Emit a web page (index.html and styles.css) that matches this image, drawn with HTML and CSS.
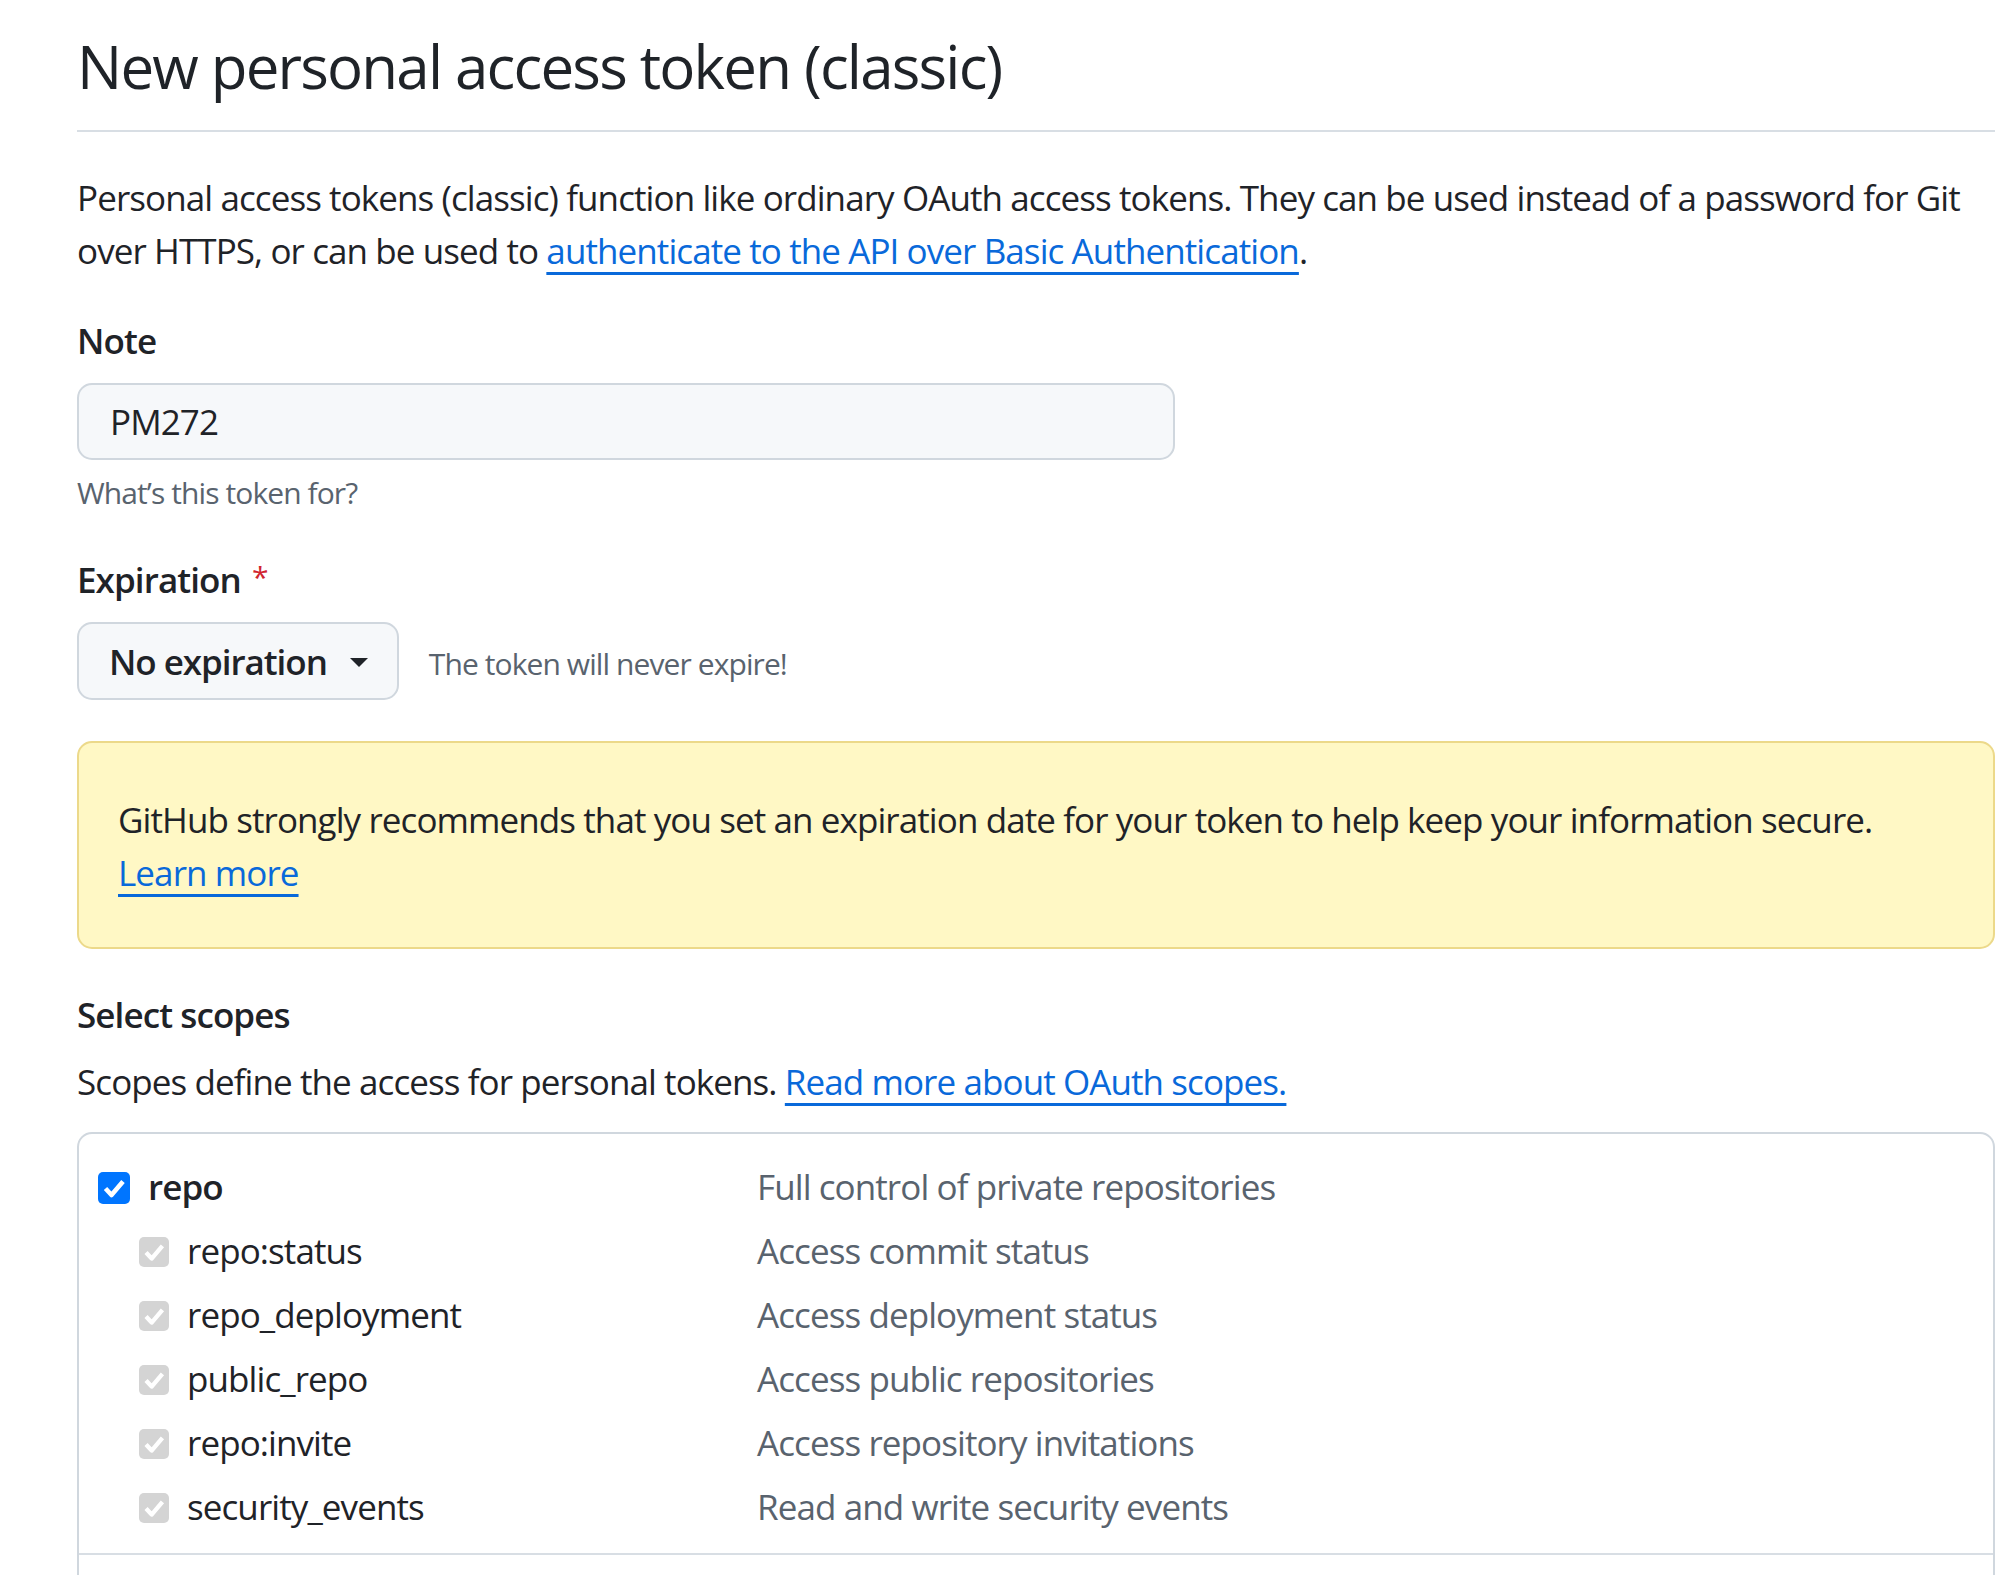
FILE: index.html
```html
<!DOCTYPE html>
<html lang="en">
<head>
<meta charset="utf-8">
<title>New personal access token (classic)</title>
<link rel="stylesheet" href="styles.css">
</head>
<body>
<main class="page">
  <h2 class="subhead">New personal access token (classic)</h2>
  <p class="intro">Personal access tokens (classic) function like ordinary OAuth access tokens. They can be used instead of a password for Git over HTTPS, or can be used to <a href="#">authenticate to the API over Basic Authentication</a>.</p>

  <div class="field">
    <label class="label">Note</label>
    <div class="input">PM272</div>
    <p class="hint">What’s this token for?</p>
  </div>

  <div class="field">
    <label class="label label-exp">Expiration <span class="req">*</span></label>
    <div class="select-row">
      <button class="select" type="button">No expiration
        <svg class="caret" viewBox="0 0 18 9" width="18" height="9"><path d="M0 0h18L9 9z" fill="#1f2328"/></svg>
      </button>
      <span class="select-note">The token will never expire!</span>
    </div>
  </div>

  <div class="flash">GitHub strongly recommends that you set an expiration date for your token to help keep your information secure. <a href="#">Learn more</a></div>

  <h3 class="scopes-title">Select scopes</h3>
  <p class="scopes-desc">Scopes define the access for personal tokens. <a href="#">Read more about OAuth scopes.</a></p>

  <div class="scopes">
    <div class="scope-group">
      <div class="scope-row parent">
        <label class="scope-name"><span class="cb cb-on"><svg viewBox="0 0 32 32"><path d="M7.5 16.5l6 6.5L25 9.5" fill="none" stroke="#fff" stroke-width="4.6" stroke-linejoin="round"/></svg></span><span class="name">repo</span></label>
        <span class="scope-desc">Full control of private repositories</span>
      </div>
      <div class="scope-row child">
        <label class="scope-name"><span class="cb cb-dis"><svg viewBox="0 0 32 32"><path d="M7.5 16.5l6 6.5L25 9.5" fill="none" stroke="#fff" stroke-width="4.6" stroke-linejoin="round"/></svg></span><span class="name">repo:status</span></label>
        <span class="scope-desc">Access commit status</span>
      </div>
      <div class="scope-row child">
        <label class="scope-name"><span class="cb cb-dis"><svg viewBox="0 0 32 32"><path d="M7.5 16.5l6 6.5L25 9.5" fill="none" stroke="#fff" stroke-width="4.6" stroke-linejoin="round"/></svg></span><span class="name">repo_deployment</span></label>
        <span class="scope-desc">Access deployment status</span>
      </div>
      <div class="scope-row child">
        <label class="scope-name"><span class="cb cb-dis"><svg viewBox="0 0 32 32"><path d="M7.5 16.5l6 6.5L25 9.5" fill="none" stroke="#fff" stroke-width="4.6" stroke-linejoin="round"/></svg></span><span class="name">public_repo</span></label>
        <span class="scope-desc">Access public repositories</span>
      </div>
      <div class="scope-row child">
        <label class="scope-name"><span class="cb cb-dis"><svg viewBox="0 0 32 32"><path d="M7.5 16.5l6 6.5L25 9.5" fill="none" stroke="#fff" stroke-width="4.6" stroke-linejoin="round"/></svg></span><span class="name">repo:invite</span></label>
        <span class="scope-desc">Access repository invitations</span>
      </div>
      <div class="scope-row child">
        <label class="scope-name"><span class="cb cb-dis"><svg viewBox="0 0 32 32"><path d="M7.5 16.5l6 6.5L25 9.5" fill="none" stroke="#fff" stroke-width="4.6" stroke-linejoin="round"/></svg></span><span class="name">security_events</span></label>
        <span class="scope-desc">Read and write security events</span>
      </div>
    </div>
    <div class="scope-group next"></div>
  </div>
</main>
</body>
</html>
```

FILE: styles.css
```css
* { box-sizing: border-box; }

html, body {
  margin: 0;
  background: #ffffff;
}

body {
  font-family: "Open Sans", "Noto Sans", "Liberation Sans", sans-serif;
  color: #1f2328;
  font-size: 35px;
  line-height: 53px;
  letter-spacing: -0.026em;
  overflow: hidden;
}

a {
  color: #0969da;
  text-decoration: underline;
  text-decoration-thickness: 3px;
  text-underline-offset: 8px;
}

.page {
  padding: 29px 18px 0 77px;
}

.subhead {
  margin: 0;
  font-size: 60px;
  font-weight: 400;
  line-height: 75px;
  letter-spacing: -0.03em;
  padding-bottom: 26px;
  border-bottom: 2px solid #d8dee4;
}

.intro {
  margin: 39px 0 0;
}

.label {
  display: block;
  font-weight: 600;
  margin-top: 37px;
}

.input {
  margin-top: 16px;
  width: 1098px;
  height: 77px;
  border: 2px solid #d0d7de;
  border-radius: 15px;
  background: #f6f8fa;
  padding-left: 31px;
  display: flex;
  align-items: center;
}

.hint {
  margin: 10px 0 0;
  font-size: 30px;
  line-height: 45px;
  color: #59636e;
}

.label-exp {
  margin-top: 35px;
}

.req {
  color: #d1242f;
  font-size: 30px;
  font-weight: 400;
  vertical-align: 5px;
  margin-left: 3px;
}

.select-row {
  margin-top: 16px;
  display: flex;
  align-items: center;
  gap: 30px;
}

.select {
  height: 78px;
  display: inline-flex;
  align-items: center;
  gap: 23px;
  padding: 0 29px 0 30px;
  border: 2px solid #d0d7de;
  border-radius: 15px;
  background: #f6f8fa;
  font: inherit;
  font-weight: 600;
  letter-spacing: -0.03em;
  color: #1f2328;
}

.caret {
  display: block;
  margin-top: 2px;
}

.select-note {
  font-size: 30px;
  line-height: 45px;
  color: #59636e;
  padding-top: 4px;
}

.flash {
  margin-top: 41px;
  padding: 50px 48px 48px 39px;
  border: 2px solid #ecd98a;
  border-radius: 15px;
  background: #fff8c5;
}

.scopes-title {
  margin: 39px 0 0;
  font-size: 35px;
  line-height: 53px;
  font-weight: 600;
}

.scopes-desc {
  margin: 14px 0 0;
}

.scopes {
  margin-top: 24px;
  border: 2px solid #d0d7de;
  border-radius: 15px;
}

.scope-group {
  padding: 22px 0 13px;
}

.scope-group.next {
  border-top: 2px solid #d8dee4;
  height: 120px;
}

.scope-row {
  display: grid;
  grid-template-columns: 678px 1fr;
  align-items: center;
  height: 64px;
}

.scope-name {
  display: flex;
  align-items: center;
  gap: 18px;
}

.name {
  margin-top: -4px;
}

.parent .scope-name { padding-left: 19px; }
.parent .name { font-weight: 600; }
.child .scope-name { padding-left: 60px; }

.cb {
  display: block;
  flex: none;
  border-radius: 5px;
}

.cb svg { display: block; width: 100%; height: 100%; }

.cb-on {
  width: 32px;
  height: 32px;
  background: #0075ff;
}

.cb-dis {
  width: 30px;
  height: 30px;
  background: #d4d4d4;
}

.scope-desc {
  color: #59636e;
  margin-top: -4px;
}
```
